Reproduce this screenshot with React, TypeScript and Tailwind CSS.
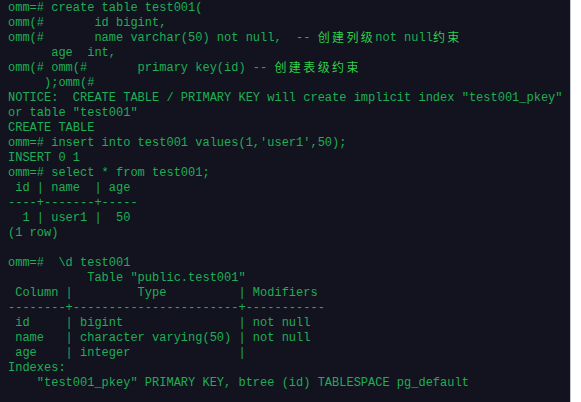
import React from "react";

type Seg = string | { cjk: string };

const lines: Seg[][] = [
  ["omm=# create table test001("],
  ["omm(#       id bigint,"],
  ["omm(#       name varchar(50) not null,  -- ", { cjk: "创建列级" }, "not null", { cjk: "约束" }],
  ["      age  int,"],
  ["omm(# omm(#       primary key(id) -- ", { cjk: "创建表级约束" }],
  ["     );omm(#"],
  ['NOTICE:  CREATE TABLE / PRIMARY KEY will create implicit index "test001_pkey"'],
  ['or table "test001"'],
  ["CREATE TABLE"],
  ["omm=# insert into test001 values(1,'user1',50);"],
  ["INSERT 0 1"],
  ["omm=# select * from test001;"],
  [" id | name  | age"],
  ["----+-------+-----"],
  ["  1 | user1 |  50"],
  ["(1 row)"],
  [""],
  ["omm=#  \\d test001"],
  ['           Table "public.test001"'],
  [" Column |         Type          | Modifiers"],
  ["--------+-----------------------+-----------"],
  [" id     | bigint                | not null"],
  [" name   | character varying(50) | not null"],
  [" age    | integer               |"],
  ["Indexes:"],
  ['    "test001_pkey" PRIMARY KEY, btree (id) TABLESPACE pg_default'],
];

export default function App() {
  return (
    <div className="flex w-[581px] h-[402px] overflow-hidden bg-white">
      {/* terminal */}
      <div className="w-[570px] h-full bg-[#12131f] pl-2 pt-px">
        {lines.map((line, i) => (
          <div
            key={i}
            className="flex items-start h-[15px] whitespace-pre text-[12px] leading-[15px] text-[#1fae55] font-['Liberation_Mono','Courier_New',monospace]"
          >
            {line.map((seg, j) =>
              typeof seg === "string" ? (
                <span key={j}>{seg}</span>
              ) : (
                <span
                  key={j}
                  className="leading-[11px] text-[#2fcf4c] text-[12px] tracking-[2.4px] font-['Noto_Sans_CJK_SC',sans-serif]"
                >
                  {seg.cjk}
                </span>
              )
            )}
          </div>
        ))}
      </div>
      <div className="w-px h-full bg-[#c4c6cc]" />
      <div className="flex-1 h-full bg-white" />
    </div>
  );
}
